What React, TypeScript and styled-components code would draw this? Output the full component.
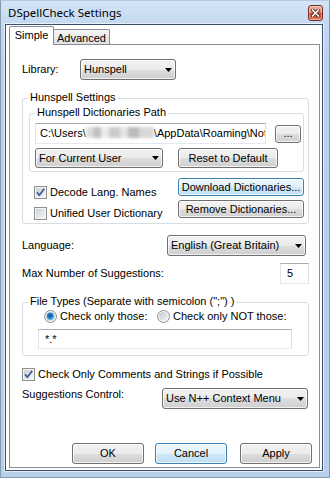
import React from "react";
import styled, { createGlobalStyle, css } from "styled-components";

const GlobalStyle = createGlobalStyle`
  * { box-sizing: border-box; }
  html, body { margin: 0; padding: 0; }
  body {
    width: 330px;
    height: 478px;
    overflow: hidden;
    background: #ffffff;
    font-family: "Liberation Sans", Arial, sans-serif;
    font-size: 11px;
    line-height: 13px;
    color: #000;
  }
`;

type Len = number | "auto" | undefined;
const px = (v: Len) => (v === undefined ? "0" : v === "auto" ? "auto" : `${v}px`);

const Window = styled.div`
  width: 330px;
  height: 478px;
  display: flex;
  flex-direction: column;
  border: 1px solid #8399b4;
  border-top-color: #b4c9e0;
  background: linear-gradient(180deg, #d4e5f7 0px, #c4d9f0 22px, #bad1eb 60px, #b8cfe9 100%);
`;

const TitleBar = styled.div`
  height: 23px;
  flex: none;
  display: flex;
  align-items: center;
  justify-content: space-between;
  padding-left: 7px;
`;

const TitleText = styled.span`
  font-family: "Noto Sans", "Open Sans", sans-serif;
  font-size: 11.5px;
  line-height: 16px;
  color: #000;
`;

const CloseButton = styled.div`
  width: 15px;
  height: 16px;
  margin-right: 6px;
  border: 1px solid #6d2f26;
  border-radius: 3px;
  background: linear-gradient(180deg, #eab0a2 0%, #dc8a76 45%, #c7452f 52%, #cf5a41 80%, #e0917a 100%);
  box-shadow: inset 0 0 0 1px rgba(255, 255, 255, 0.35);
  display: flex;
  align-items: center;
  justify-content: center;
`;

const Client = styled.div`
  flex: 1;
  min-height: 0;
  margin: 0 6px 6px 4px;
  border: 1px solid #3b5069;
  background: #fff;
  box-shadow: 0 0 0 1px rgba(255, 255, 255, 0.6);
  display: flex;
  flex-direction: column;
  padding: 1px 2px 2px 3px;
`;

const TabStrip = styled.div`
  height: 18px;
  flex: none;
  display: flex;
  align-items: flex-end;
  z-index: 1;
`;

const Tab = styled.div<{ $active?: boolean; $w: number }>`
  width: ${(p) => p.$w}px;
  flex: none;
  border: 1px solid #898c95;
  border-bottom: none;
  border-radius: 2px 2px 0 0;
  text-align: center;
  line-height: 13px;
  white-space: nowrap;
  ${(p) =>
    p.$active
      ? css`
          height: 19px;
          margin-bottom: -1px;
          padding-top: 2px;
          background: #fff;
          z-index: 2;
        `
      : css`
          height: 15px;
          margin-left: -1px;
          padding-top: 2px;
          background: linear-gradient(180deg, #f5f5f5 0%, #e0e0e0 100%);
        `}
`;

const Page = styled.div`
  flex: 1;
  min-height: 0;
  border: 1px solid #898c95;
  background: #fff;
  display: flex;
  flex-direction: column;
  padding: 14px 10px 3px 12px;
`;

const Row = styled.div<{ $mt?: number; $align?: string; $ml?: number }>`
  flex: none;
  display: flex;
  align-items: ${(p) => p.$align ?? "center"};
  margin-top: ${(p) => px(p.$mt)};
  margin-left: ${(p) => px(p.$ml)};
`;

const FieldLabel = styled.span<{ $w?: number }>`
  flex: none;
  width: ${(p) => (p.$w ? `${p.$w}px` : "auto")};
  white-space: nowrap;
`;

const ComboBox = styled.div<{ $w: number; $h?: number; $ml?: Len; $mr?: number }>`
  flex: none;
  width: ${(p) => p.$w}px;
  height: ${(p) => p.$h ?? 21}px;
  margin-left: ${(p) => px(p.$ml)};
  margin-right: ${(p) => px(p.$mr)};
  display: flex;
  align-items: center;
  justify-content: space-between;
  padding: 0 3px;
  border: 1px solid #707070;
  border-radius: 3px;
  background: linear-gradient(180deg, #f2f2f2 0%, #ebebeb 50%, #dddddd 50%, #cfcfcf 100%);
  box-shadow: inset 0 0 0 1px rgba(255, 255, 255, 0.7);
  white-space: nowrap;
`;

const EditBox = styled.div<{ $w: number; $h?: number; $ml?: Len; $mr?: number; $mt?: number; $pl?: number }>`
  flex: none;
  align-self: flex-start;
  width: ${(p) => p.$w}px;
  height: ${(p) => p.$h ?? 21}px;
  margin: ${(p) => px(p.$mt)} ${(p) => px(p.$mr)} 0 ${(p) => px(p.$ml)};
  border: 1px solid;
  border-color: #abadb3 #dbdfe6 #e3e9ef #e2e3ea;
  background: #fff;
  padding-left: ${(p) => p.$pl ?? 4}px;
  line-height: ${(p) => (p.$h ?? 21) - 2}px;
  white-space: nowrap;
  overflow: hidden;
`;

const BlurredName = styled.span`
  display: inline-block;
  width: 68px;
  height: 11px;
  vertical-align: -1px;
  background: linear-gradient(
    90deg,
    #dedede 0 10%,
    #c2c2c2 10% 22%,
    #ececec 22% 34%,
    #cbcbcb 34% 50%,
    #e4e4e4 50% 62%,
    #bcbcbc 62% 78%,
    #d8d8d8 78% 100%
  );
  filter: blur(1.4px);
`;

const PushButton = styled.button<{ $w: number; $h?: number; $default?: boolean; $ml?: Len }>`
  appearance: none;
  font: inherit;
  color: #000;
  margin: 0;
  margin-left: ${(p) => px(p.$ml)};
  padding: 0;
  flex: none;
  width: ${(p) => p.$w}px;
  height: ${(p) => p.$h ?? 21}px;
  display: flex;
  align-items: center;
  justify-content: center;
  white-space: nowrap;
  line-height: 13px;
  border: 1px solid ${(p) => (p.$default ? "#3c7fb1" : "#707070")};
  border-radius: 3px;
  background: ${(p) =>
    p.$default
      ? "linear-gradient(180deg, #eef7fd 0%, #e1f1fb 50%, #cfe8f8 50%, #bfe0f5 100%)"
      : "linear-gradient(180deg, #f2f2f2 0%, #ebebeb 50%, #dddddd 50%, #cfcfcf 100%)"};
  box-shadow: inset 0 0 0 1px rgba(255, 255, 255, 0.75);
`;

const Group = styled.div<{ $mt: number; $ml?: number; $mr?: number; $pb: number }>`
  flex: none;
  display: flex;
  flex-direction: column;
  border: 1px solid #d5dfe5;
  border-radius: 3px;
  margin: ${(p) => p.$mt}px ${(p) => px(p.$mr)} 0 ${(p) => px(p.$ml)};
  padding-bottom: ${(p) => p.$pb}px;
`;

const Legend = styled.div`
  align-self: flex-start;
  margin: -8px 0 0 5px;
  padding: 0 2px;
  background: #fff;
  line-height: 13px;
  white-space: nowrap;
`;

const OptionsRow = styled.div`
  display: flex;
  align-items: flex-start;
`;

const CheckColumn = styled.div`
  display: flex;
  flex-direction: column;
  gap: 8px;
  margin: 14px 0 0 11px;
`;

const ButtonColumn = styled.div`
  display: flex;
  flex-direction: column;
  gap: 4px;
  margin: 6px 4px 0 auto;
`;

const CheckRow = styled.div<{ $mt?: number }>`
  flex: none;
  height: 13px;
  display: flex;
  align-items: center;
  gap: 3px;
  margin-top: ${(p) => px(p.$mt)};
  white-space: nowrap;
`;

const CheckBoxBox = styled.span`
  flex: none;
  width: 13px;
  height: 13px;
  border: 1px solid #8e8f8f;
  background: linear-gradient(135deg, #c6cacf 0%, #e9ebee 65%, #f8f8f8 100%);
  box-shadow: inset 0 0 0 1px #f4f4f4;
  display: flex;
`;

const RadioRow = styled.div`
  display: flex;
  align-items: center;
  height: 13px;
  margin: 2px 0 0 21px;
`;

const RadioItem = styled.div<{ $w?: number }>`
  flex: none;
  width: ${(p) => (p.$w ? `${p.$w}px` : "auto")};
  display: flex;
  align-items: center;
  gap: 3px;
  white-space: nowrap;
`;

const ButtonRow = styled.div`
  margin-top: auto;
  margin-right: -3px;
  display: flex;
  justify-content: flex-end;
  align-items: center;
`;

const DropArrow = () => (
  <svg width="7" height="4" viewBox="0 0 7 4">
    <polygon points="0,0 7,0 3.5,4" fill="#000" />
  </svg>
);

const Combo: React.FC<{ w: number; h?: number; ml?: Len; mr?: number; children: React.ReactNode }> = ({
  w,
  h,
  ml,
  mr,
  children,
}) => (
  <ComboBox $w={w} $h={h} $ml={ml} $mr={mr}>
    <span>{children}</span>
    <DropArrow />
  </ComboBox>
);

const CheckBox: React.FC<{ checked?: boolean }> = ({ checked }) => (
  <CheckBoxBox>
    {checked && (
      <svg width="11" height="11" viewBox="0 0 11 11">
        <path d="M2 5.3 L4.3 8.2 L9.2 1.8" fill="none" stroke="#3f5a96" strokeWidth="1.8" strokeLinejoin="round" />
      </svg>
    )}
  </CheckBoxBox>
);

const Radio: React.FC<{ checked?: boolean; id: string }> = ({ checked, id }) => (
  <svg width="13" height="13" viewBox="0 0 13 13" style={{ flex: "none" }}>
    <defs>
      <linearGradient id={`${id}-f`} x1="0" y1="0" x2="1" y2="1">
        <stop offset="0" stopColor="#c4c8cd" />
        <stop offset="1" stopColor="#f7f7f7" />
      </linearGradient>
      <radialGradient id={`${id}-d`} cx="0.45" cy="0.4" r="0.6">
        <stop offset="0" stopColor="#0f4d95" />
        <stop offset="0.5" stopColor="#2a7cc6" />
        <stop offset="1" stopColor="#a6dbf7" />
      </radialGradient>
    </defs>
    <circle cx="6.5" cy="6.5" r="6" fill="#f4f4f4" stroke="#8e8f8f" />
    <circle cx="6.5" cy="6.5" r="4.5" fill={`url(#${id}-f)`} />
    {checked && <circle cx="6.5" cy="6.5" r="4" fill={`url(#${id}-d)`} />}
  </svg>
);

export default function App() {
  return (
    <>
      <GlobalStyle />
      <Window>
        <TitleBar>
          <TitleText>DSpellCheck Settings</TitleText>
          <CloseButton>
            <svg width="9" height="8" viewBox="0 0 9 8">
              <path d="M1.5 1 L7.5 7 M7.5 1 L1.5 7" stroke="#5a2018" strokeWidth="3.2" strokeLinecap="square" />
              <path d="M1.5 1 L7.5 7 M7.5 1 L1.5 7" stroke="#ffffff" strokeWidth="1.6" strokeLinecap="square" />
            </svg>
          </CloseButton>
        </TitleBar>
        <Client>
          <TabStrip>
            <Tab $active $w={45}>
              Simple
            </Tab>
            <Tab $w={57}>Advanced</Tab>
          </TabStrip>
          <Page>
            <Row>
              <FieldLabel $w={58}>Library:</FieldLabel>
              <Combo w={96}>Hunspell</Combo>
            </Row>

            <Group $mt={18} $pb={3}>
              <Legend>Hunspell Settings</Legend>
              <Group $mt={9} $ml={6} $mr={4} $pb={3}>
                <Legend>Hunspell Dictionaries Path</Legend>
                <Row $mt={4}>
                  <EditBox $w={231} $ml={5}>
                    C:\Users\<BlurredName />\AppData\Roaming\Not
                  </EditBox>
                  <PushButton $w={26} $h={18} $ml={9}>
                    ...
                  </PushButton>
                </Row>
                <Row $mt={4} $ml={5}>
                  <Combo w={128} h={20}>
                    For Current User
                  </Combo>
                  <PushButton $w={100} $h={20} $ml={15}>
                    Reset to Default
                  </PushButton>
                </Row>
              </Group>
              <OptionsRow>
                <CheckColumn>
                  <CheckRow>
                    <CheckBox checked />
                    <span>Decode Lang. Names</span>
                  </CheckRow>
                  <CheckRow>
                    <CheckBox />
                    <span>Unified User Dictionary</span>
                  </CheckRow>
                </CheckColumn>
                <ButtonColumn>
                  <PushButton $w={126} $h={18} $default>
                    Download Dictionaries...
                  </PushButton>
                  <PushButton $w={126} $h={18}>
                    Remove Dictionaries...
                  </PushButton>
                </ButtonColumn>
              </OptionsRow>
            </Group>

            <Row $mt={11}>
              <FieldLabel>Language:</FieldLabel>
              <Combo w={139} ml="auto" mr={3}>
                English (Great Britain)
              </Combo>
            </Row>

            <Row $mt={7}>
              <FieldLabel>Max Number of Suggestions:</FieldLabel>
              <EditBox $w={29} $ml="auto" $pl={6}>
                5
              </EditBox>
            </Row>

            <Group $mt={18} $pb={6}>
              <Legend>File Types (Separate with semicolon (";") )</Legend>
              <RadioRow>
                <RadioItem $w={113}>
                  <Radio checked id="r1" />
                  <span>Check only those:</span>
                </RadioItem>
                <RadioItem>
                  <Radio id="r2" />
                  <span>Check only NOT those:</span>
                </RadioItem>
              </RadioRow>
              <EditBox $w={254} $h={20} $mt={6} $ml={15} $pl={6}>
                *.*
              </EditBox>
            </Group>

            <CheckRow $mt={12}>
              <CheckBox checked />
              <span>Check Only Comments and Strings if Possible</span>
            </CheckRow>

            <Row $mt={7} $align="flex-start">
              <FieldLabel>Suggestions Control:</FieldLabel>
              <Combo w={146} ml="auto" mr={1}>
                Use N++ Context Menu
              </Combo>
            </Row>

            <ButtonRow>
              <PushButton $w={72}>OK</PushButton>
              <PushButton $w={72} $ml={11} $default>
                Cancel
              </PushButton>
              <PushButton $w={72} $ml={13}>
                Apply
              </PushButton>
            </ButtonRow>
          </Page>
        </Client>
      </Window>
    </>
  );
}
